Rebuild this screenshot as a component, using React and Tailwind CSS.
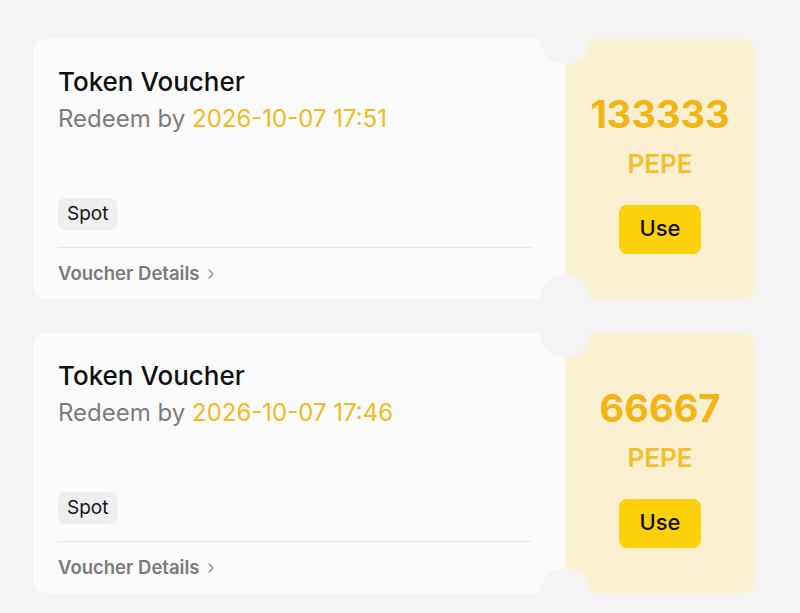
import { ChevronRight } from 'lucide-react';

const VOUCHERS = [
  { id: 1, title: 'Token Voucher', expires: '2026-10-07 17:51', amount: '133333', coin: 'PEPE', tag: 'Spot' },
  { id: 2, title: 'Token Voucher', expires: '2026-10-07 17:46', amount: '66667', coin: 'PEPE', tag: 'Spot' },
];

function VoucherCard({ v }) {
  return (
    <div className="relative flex h-[260px] w-[722px] overflow-hidden rounded-[13px]">
      {/* left: voucher info */}
      <div className="flex flex-1 flex-col bg-[#fbfbfb] pl-[25px] pr-[33px] pt-[27px]">
        <h2 className="h-[32px] text-[26px] font-medium leading-[32px] text-[#111]">{v.title}</h2>
        <p className="mt-[6px] h-[30px] text-[24px] leading-[30px] text-[#7b7b7b]">
          Redeem by <span className="text-[#f2ba1c]">{v.expires}</span>
        </p>
        <div className="mt-[64px] flex">
          <span className="flex h-[32px] items-center rounded-[7px] bg-[#efefef] px-[9px] text-[19px] text-[#151515]">
            {v.tag}
          </span>
        </div>
        <div className="mt-[17px] h-px bg-[#e9e9e9]" />
        <button className="flex flex-1 items-center gap-[4px] text-[18.5px] font-semibold text-[#7a7a7a]">
          Voucher Details <ChevronRight className="h-4 w-4 text-[#8a8a8a]" strokeWidth={2} />
        </button>
      </div>

      {/* right: amount */}
      <div className="flex w-[190px] flex-col items-center bg-[#fcf0d2] pt-[53px]">
        <div className="text-[38px] font-bold leading-[44px] text-[#f4b412]">{v.amount}</div>
        <div className="mt-[12px] text-[26px] font-semibold leading-[32px] text-[#f3bf2a]">{v.coin}</div>
        <button className="mt-[25px] h-[49px] w-[82px] rounded-[8px] bg-[#fdd00c] pb-[2px] text-[22px] font-medium text-[#111]">
          Use
        </button>
      </div>

      {/* ticket notches */}
      <div className="absolute left-[507px] top-[-25px] h-[50px] w-[50px] rounded-full bg-[#f4f4f5]" />
      <div className="absolute bottom-[-25px] left-[507px] h-[50px] w-[50px] rounded-full bg-[#f4f4f5]" />
    </div>
  );
}

export default function App() {
  return (
    <div
      className="flex min-h-[613px] w-[800px] flex-col gap-[34px] bg-[#f4f4f5] pl-[33px] pt-[39px]"
      style={{ fontFamily: 'Inter, "Noto Sans", sans-serif' }}
    >
      {VOUCHERS.map((v) => (
        <VoucherCard key={v.id} v={v} />
      ))}
    </div>
  );
}
